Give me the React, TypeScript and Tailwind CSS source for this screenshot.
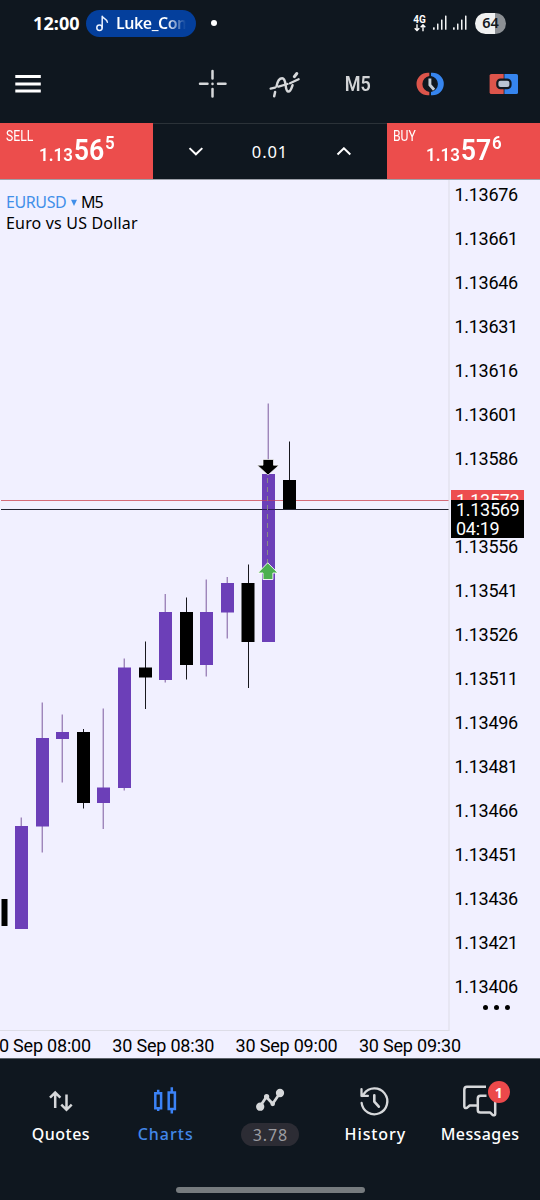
type Candle = { x: number; top: number; bottom: number; high: number; low: number; up: boolean; w?: number };

const PLOT_TOP = 180;

const candles: Candle[] = [
  { x: 1.5, top: 899, bottom: 926, high: 899, low: 926, up: false, w: 6 },
  { x: 15, top: 826, bottom: 929, high: 817.5, low: 929, up: true },
  { x: 36, top: 738, bottom: 826.5, high: 702.5, low: 852.5, up: true },
  { x: 56, top: 732, bottom: 739, high: 714.5, low: 782.5, up: true },
  { x: 77, top: 732, bottom: 803, high: 729, low: 808.5, up: false },
  { x: 97, top: 787.5, bottom: 803, high: 708.5, low: 829, up: true },
  { x: 118, top: 667.5, bottom: 788, high: 658.5, low: 790.5, up: true },
  { x: 139, top: 667.5, bottom: 677.5, high: 641.5, low: 709, up: false },
  { x: 159, top: 612, bottom: 680, high: 594, low: 682.5, up: true },
  { x: 180, top: 612, bottom: 665, high: 597.5, low: 679.5, up: false },
  { x: 200, top: 612, bottom: 665, high: 579.5, low: 676.5, up: true },
  { x: 221, top: 583, bottom: 612.5, high: 577, low: 638.5, up: true },
  { x: 241.5, top: 583, bottom: 642, high: 564.5, low: 688, up: false },
  { x: 262, top: 474, bottom: 642, high: 403.5, low: 642, up: true },
  { x: 283, top: 480, bottom: 510, high: 441.5, low: 510, up: false },
];

const pricesAbove = ["1.13676", "1.13661", "1.13646", "1.13631", "1.13616", "1.13601", "1.13586"];
const pricesBelow = [
  "1.13556", "1.13541", "1.13526", "1.13511", "1.13496", "1.13481", "1.13466", "1.13451", "1.13436", "1.13421", "1.13406",
];

const times = ["30 Sep 08:00", "30 Sep 08:30", "30 Sep 09:00", "30 Sep 09:30"];

function Signal() {
  return (
    <svg width="14" height="16" viewBox="0 0 14 16" fill="#f2f3f4">
      <rect x="0" y="12.2" width="1.7" height="2.6" rx=".6" />
      <rect x="4" y="8.6" width="1.5" height="6.2" rx=".5" />
      <rect x="8" y="4.4" width="1.5" height="10.4" rx=".5" />
      <rect x="12" y="0.4" width="1.5" height="14.4" rx=".5" />
    </svg>
  );
}

function StatusBar() {
  return (
    <div className="flex h-[46px] items-center pl-[33px] pr-[34px] text-white">
      <span className="w-[53px] text-[18px] font-bold leading-[24px] tracking-[0.1px]">12:00</span>
      <div className="flex h-[27px] w-[110px] items-center rounded-full bg-[#043f9c] pl-[10px]">
        <svg width="13" height="17" viewBox="0 0 13 17" fill="none" stroke="#e9f1ff" strokeWidth="1.5" strokeLinecap="round" strokeLinejoin="round">
          <circle cx="3.5" cy="12.8" r="2.7" />
          <path d="M6.2 12.8V1.3c.5 2 5.2 2.4 5.2 6" />
        </svg>
        <span className="ml-[7px] w-[70px] overflow-hidden whitespace-nowrap bg-gradient-to-r from-white from-72% to-transparent to-100% bg-clip-text text-[16px] font-semibold leading-[24px] tracking-[-0.5px] text-transparent">Luke_Com</span>
      </div>
      <span className="ml-[15px] size-[6px] rounded-full bg-white" />
      <div className="ml-auto flex items-center">
        <div className="flex w-[13px] flex-col items-center">
          <span className="font-[Roboto] text-[10px] font-bold leading-[9px]">4G</span>
          <svg width="12" height="8" viewBox="0 0 12 8" fill="none" stroke="#fff" strokeWidth="1.4">
            <path d="M3 .3v6M.7 4.2 3 6.6l2.3-2.4M9 7.2v-6M6.7 3.3 9 .9l2.3 2.4" />
          </svg>
        </div>
        <div className="ml-[7px] mr-px flex gap-[6px]"><Signal /><Signal /></div>
        <span className="ml-[7px] flex h-[21px] w-[31px] items-center justify-center rounded-full bg-[linear-gradient(90deg,#f0f1f1_64%,#8c9094_64%)] text-[14.5px] font-semibold text-[#15191e]">64</span>
      </div>
    </div>
  );
}

function Toolbar() {
  return (
    <div className="flex h-[77px] items-center pb-[2px] pl-[15px] pr-[21px]">
      <svg width="26" height="18" viewBox="0 0 26 18" fill="#fff">
        <path d="M.3 0h25.5v3H.3zM.3 7.4h25.5v3H.3zM.3 14.6h25.5v3H.3z" />
      </svg>
      <svg className="ml-[157px]" width="30" height="30" viewBox="0 0 30 30" stroke="#d6d8da" strokeWidth="2.5" strokeLinecap="round">
        <path d="M14.5 2v7.5M14.5 20v7.5M2 14.8h7.5M20 14.8h7.5M14.5 14.7v.2" />
      </svg>
      <svg className="ml-[41px]" width="32" height="28" viewBox="0 0 32 28" fill="none" stroke="#d6d8da" strokeLinecap="round" strokeLinejoin="round">
        <path d="M1.6 18.6 6 17.6M9.5 16.6l9-2.6M21 13.3l8.6-4" strokeWidth="2.3" />
        <path d="m5.2 26.2.9-4.2M7.5 16.5C8.4 11.5 10.6 8.2 13.2 8.2c5 0 2 13.4 6.2 13.4 2.3 0 3.2-3.6 4.1-6.3" strokeWidth="2.5" />
        <path d="m25.4 6.6 2.3-3" strokeWidth="3.2" />
      </svg>
      <div className="ml-[42px] w-[28px] text-center font-[Roboto] text-[20.5px] font-semibold leading-[24px] text-[#d2d4d6]"><span className="inline-block origin-center scale-x-[0.88]">M5</span></div>
      <svg className="ml-[45px]" width="29" height="24" viewBox="0 0 29 24" fill="none">
        <path d="M13.3.8h-1.5A11.3 11.2 0 0 0 11.8 23.2h1.5v-3.1A8.2 8.2 0 0 1 13.3 3.9z" fill="#dd554b" />
        <path d="M15 .8h1.5A11.3 11.2 0 0 1 16.5 23.2H15v-3.1A8.2 8.2 0 0 0 15 3.9z" fill="#3685ee" />
        <path d="M13.9 6.4v6.6l4.2 4.8" stroke="#c5cdd6" strokeWidth="2.9" />
      </svg>
      <svg className="ml-auto" width="30" height="22" viewBox="0 0 30 22">
        <path d="M2.5 1h12.2v20H2.5Q.6 21 .6 19.5v-17Q.6 1 2.5 1" fill="#dd554b" />
        <path d="M15.4 1h11.9Q29 1 29 2.5v17q0 1.5-1.7 1.5H15.4z" fill="#3685ee" />
        <rect x="8.3" y="6.6" width="13.2" height="8.6" rx="3.2" fill="#b9c5d3" stroke="#101820" strokeWidth="2.2" />
      </svg>
    </div>
  );
}

function Quote({ label, base, big, sup }: { label: string; base: string; big: string; sup: string }) {
  return (
    <div className="flex h-[56px] w-[153px] items-start bg-[#ec4d4c] pl-[6px] pt-[7px] font-[Roboto] text-white">
      <span className="w-[33px] text-[14.5px] leading-[14px]"><span className="inline-block origin-left scale-x-[0.84]">{label}</span></span>
      <span className="flex origin-left scale-x-[0.89] items-start">
        <span className="mt-[14px] text-[19px] font-semibold leading-[22px]">{base}</span>
        <span className="ml-[1px] text-[30px] font-semibold leading-[40px]">{big}</span>
        <span className="ml-[1px] mt-[2px] text-[19px] font-semibold leading-[22px]">{sup}</span>
      </span>
    </div>
  );
}

function TradePanel() {
  return (
    <div className="flex h-[57px] border-b border-[#9da0a8]">
      <Quote label="SELL" base="1.13" big="56" sup="5" />
      <div className="flex flex-1 items-center justify-between border-t border-[#2b3238] pl-[35px] pr-[35px] text-white">
        <svg width="16" height="10" viewBox="0 0 16 10" fill="none" stroke="#fff" strokeWidth="2"><path d="m1.5 1.1 6.4 6.2 6.4-6.2" /></svg>
        <span className="text-[16.5px] leading-[24px] tracking-[0.9px]">0.01</span>
        <svg width="16" height="10" viewBox="0 0 16 10" fill="none" stroke="#fff" strokeWidth="2"><path d="m1.5 7.5 6.4-6.2 6.4 6.2" /></svg>
      </div>
      <Quote label="BUY" base="1.13" big="57" sup="6" />
    </div>
  );
}

function Plot() {
  return (
    <svg className="block" width="450" height="851" viewBox={`0 ${PLOT_TOP} 450 851`}>
      {candles.map((c) => {
        const w = c.w ?? 13;
        const color = c.up ? "#6c3fb8" : "#000";
        const mid = Math.floor(c.x + w / 2) - (c.up ? 0.3 : 0);
        return (
          <g key={c.x}>
            <rect x={mid} y={c.high} width="1" height={c.low - c.high} fill={c.up ? "#7d5a9f" : "#18181e"} />
            <rect x={c.x} y={c.top} width={w} height={c.bottom - c.top} fill={color} />
          </g>
        );
      })}
      <path d="M1 500.5h448" stroke="#d46b79" />
      <path d="M1 509.5h448" stroke="#242432" />
      <rect x="262" y="474" width="13" height="168" fill="#6c3fb8" />
      <path d="M262 500.5h13" stroke="#a83c7c" />
      <path d="M262 509.5h13" stroke="#2e1b60" />
      <path d="M283 500.5h13" stroke="#000" />
      <path d="M267.5 478v86" stroke="#898a85" strokeDasharray="5 4" />
      <path d="M263 459.5h10.5v5.7h5.5L268 475l-10.7-9.8h5.7z" fill="#000" stroke="#fff" strokeWidth=".7" />
      <path d="m267.7 562.8 10.2 10.2h-5v6.5H263V573h-5.2z" fill="#4caf50" stroke="#fff" strokeWidth=".9" />
      <path d="M449 180v850.5M0 1030.5h449.5M41.5 1030v1M165.5 1030v1" stroke="#dddde7" />
    </svg>
  );
}

function PriceList({ items }: { items: string[] }) {
  return (
    <div className="flex flex-col gap-[20.04px]">
      {items.map((p) => <span key={p} className="h-[24px] leading-[24px]">{p}</span>)}
    </div>
  );
}

function Chart() {
  return (
    <div className="flex h-[878px] flex-col bg-[#f1f0ff] text-black">
      <div className="flex h-[851px]">
        <div className="relative w-[450px]">
          <Plot />
          <div className="absolute left-[6px] top-[12px] text-[16px] leading-[21px]">
            <div className="flex items-center">
              <span className="w-[62px] tracking-[-0.4px] text-[#418fe9]">EURUSD</span>
              <svg width="12" height="8" viewBox="0 0 12 8"><path d="M3 .8h6L6 7z" fill="#418fe9" /></svg>
              <span className="ml-[1px] tracking-[-0.9px]">M5</span>
            </div>
            <div className="whitespace-nowrap tracking-[0.18px]">Euro vs US Dollar</div>
          </div>
        </div>
        <div className="flex w-[90px] flex-col pl-[1px] pt-[2.5px] font-[Roboto] text-[18px] tracking-[-0.3px]">
          <div className="pl-[3.5px]"><PriceList items={pricesAbove} /></div>
          <div className="mt-[19.3px] flex h-[48px] w-[73px] flex-col bg-[#ed4d4f] text-white">
            <span className="h-[10px] overflow-hidden pl-[5px] leading-[22px]">1.13573</span>
            <div className="h-[38px] bg-black pl-[5px] leading-[19px]">
              <div>1.13569</div>
              <div>04:19</div>
            </div>
          </div>
          <div className="-mt-[3.2px] pl-[3.5px]"><PriceList items={pricesBelow} /></div>
          <div className="ml-[32px] mt-[6px] flex gap-[6px]">
            <i className="size-[5px] rounded-full bg-black" /><i className="size-[5px] rounded-full bg-black" /><i className="size-[5px] rounded-full bg-black" />
          </div>
        </div>
      </div>
      <div className="-ml-[11px] flex overflow-hidden font-[Roboto] text-[18px] leading-[30px] tracking-[-0.2px]">
        {times.map((t) => <span key={t} className="w-[123.3px] shrink-0 whitespace-nowrap">{t}</span>)}
      </div>
    </div>
  );
}

function BottomNav() {
  return (
    <div className="flex h-[142px] flex-col border-t border-[#5d6269] text-[16px] font-medium text-white">
      <div className="flex pl-[8.5px] pr-[7.5px] pt-[26px]">
        <div className="flex w-[104.8px] flex-col items-center">
          <svg width="24" height="36" viewBox="0 0 24 36" fill="none" stroke="#d6d8da" strokeWidth="2.5">
            <path d="M6.2 23V8M1 12.7 6.2 7.5l5.2 5.2M17.5 9.5v15M12.3 19.6l5.2 5.2 5.2-5.2" />
          </svg>
          <span className="mt-[1px] leading-[24px] tracking-[0.5px]">Quotes</span>
        </div>
        <div className="flex w-[104.8px] flex-col items-center text-[#4287e8]">
          <svg width="24" height="36" viewBox="0 0 24 36" fill="none" stroke="#3b82f6" strokeWidth="2.5">
            <path d="M1.3 8.3h5.8v15H1.3zM4.2 4.8v3M4.2 23.3V26M14.7 7.5h6.2V24h-6.2zM17.8 2.2v5M17.8 24v4.6" />
          </svg>
          <span className="mt-[1px] leading-[24px] tracking-[1px]">Charts</span>
        </div>
        <div className="flex w-[104.8px] flex-col items-center">
          <svg width="30" height="36" viewBox="0 0 30 36" fill="#d6d8da" stroke="#d6d8da" strokeWidth="2.7">
            <path d="m5 21.5 6.3-9.5 6.4 6.8L25 8" fill="none" strokeLinejoin="round" />
            <circle cx="5.2" cy="21.7" r="2.8" /><circle cx="11.6" cy="11.7" r="1.3" /><circle cx="17.7" cy="18.8" r="1" /><circle cx="25" cy="8" r="2.8" />
          </svg>
          <span className="mt-[2px] flex h-[23px] w-[58px] items-center justify-center rounded-full bg-[#2c2c34] font-normal tracking-[0.9px] text-[#9c9da2]">3.78</span>
        </div>
        <div className="flex w-[104.8px] flex-col items-center">
          <svg width="32" height="36" viewBox="0 0 32 36" fill="none" stroke="#d6d8da" strokeWidth="2.3" strokeLinecap="round" strokeLinejoin="round">
            <path d="M2.6 17.8A12.9 12.9 0 1 0 5 8.7L3 11M2.5 4.2v6.7h6.4" />
            <path d="M15.3 10.2v6.4l4.5 5.1" strokeWidth="2.6" />
          </svg>
          <span className="mt-[1px] leading-[24px] tracking-[0.9px]">History</span>
        </div>
        <div className="relative flex w-[104.8px] flex-col items-center">
          <svg width="36" height="36" viewBox="0 0 36 36" fill="none" stroke="#d6d8da" strokeWidth="2.5" strokeLinejoin="round">
            <path d="M15 20.5H7.7l-2.8 2.4q-2.6.8-2.6-1.6V4.8Q2.3 1.8 5 1.8h19" />
            <path d="M33.2 10.7V29q0 1.7-2.4 1.1l-2.5-2.5H18.5q-2.7 0-2.7-2.6V13.6q0-2.9 2.7-2.9h6" />
          </svg>
          <span className="absolute left-[60px] top-[-4px] flex size-[22px] items-center justify-center rounded-full bg-[#ec494b] text-[14px] font-bold">1</span>
          <span className="mt-[1px] leading-[24px] tracking-[0.4px]">Messages</span>
        </div>
      </div>
      <div className="mx-auto mt-[41px] h-[6px] w-[189px] shrink-0 rounded-full bg-[#767b7e]" />
    </div>
  );
}

export default function App() {
  return (
    <main className="flex h-[1200px] w-[540px] flex-col overflow-hidden bg-[#0f171f] font-['Noto_Sans',sans-serif]">
      <StatusBar />
      <Toolbar />
      <TradePanel />
      <Chart />
      <BottomNav />
    </main>
  );
}
